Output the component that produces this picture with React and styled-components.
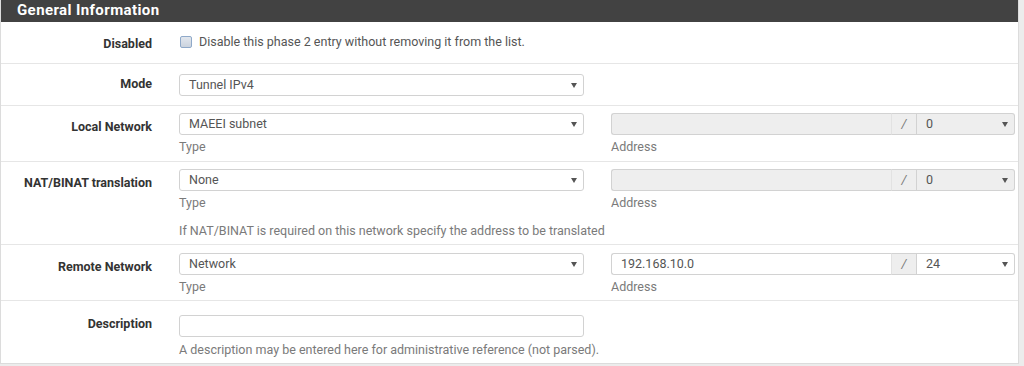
import React from 'react';
import styled, { createGlobalStyle } from 'styled-components';

const GlobalStyle = createGlobalStyle`
  body {
    margin: 0;
    background: #ececec;
    font-family: Roboto, "Liberation Sans", Arial, sans-serif;
    font-size: 12.5px;
    color: #333;
  }
`;

const Panel = styled.div`
  width: 1017px;
  background: #fff;
  border: 1px solid #dcdcdc;
  border-top: none;
`;

const PanelHeading = styled.div`
  height: 22px;
  background: #424242;
  color: #fff;
  font-size: 15px;
  font-weight: 700;
  line-height: 20px;
  padding-left: 16px;
  letter-spacing: 0.4px;
`;

const Row = styled.div`
  display: flex;
  align-items: flex-start;
  padding: ${(p) => p.$top}px 0 ${(p) => p.$bottom}px;
  border-bottom: ${(p) => (p.$last ? 'none' : '1px solid #e6e6e6')};
`;

const Label = styled.div`
  flex: 0 0 151px;
  text-align: right;
  font-weight: 700;
  line-height: 18px;
  color: #333;
  margin-top: ${(p) => p.$offset}px;
`;

const Field = styled.div`
  flex: 0 0 405px;
  min-width: 0;
  margin-left: 27px;
  display: flex;
  flex-direction: column;
`;

const SecondField = styled(Field)`
  flex: 0 0 404px;
`;

const Help = styled.div`
  color: #7a7a7a;
  line-height: 18px;
  white-space: nowrap;
  margin-top: ${(p) => p.$gap || 3}px;
`;

const CheckLine = styled.label`
  display: flex;
  align-items: center;
  gap: 7px;
  line-height: 18px;
  color: #555;
  white-space: nowrap;
  margin-left: 1px;
`;

const Check = styled.span`
  flex: none;
  width: 10px;
  height: 10px;
  border: 1px solid #8fa9c9;
  border-radius: 2px;
  background: linear-gradient(#e2e7ee, #cbd3de);
`;

const Box = styled.div`
  position: relative;
  height: 22px;
  box-sizing: border-box;
  border: 1px solid #d2d2d2;
  border-radius: 3px;
  background: ${(p) => (p.$disabled ? '#eeeeee' : '#fff')};
  color: #555;
  line-height: 20px;
  padding-left: 9px;
`;

const Arrow = styled.svg`
  position: absolute;
  right: 6px;
  top: 8px;
`;

const Group = styled.div`
  display: flex;
`;

const GroupInput = styled(Box)`
  flex: 1 1 auto;
  border-radius: 3px 0 0 3px;
  border-right: none;
`;

const Addon = styled.div`
  width: 26px;
  height: 22px;
  box-sizing: border-box;
  border: 1px solid #d2d2d2;
  border-left: 1px solid #e2e2e2;
  background: #eee;
  color: #777;
  line-height: 20px;
  text-align: center;
  font-style: italic;
`;

const GroupSelect = styled(Box)`
  width: 98px;
  border-left: none;
  border-radius: 0 3px 3px 0;
`;

const Caret = () => (
  <Arrow width="6" height="5" viewBox="0 0 6 5">
    <path d="M0 0 L6 0 L3 5 Z" fill="#555" />
  </Arrow>
);

const Select = ({ value }) => (
  <Box>
    {value}
    <Caret />
  </Box>
);

const Address = ({ value, mask, disabled }) => (
  <SecondField>
    <Group>
      <GroupInput $disabled={disabled}>{value}</GroupInput>
      <Addon>/</Addon>
      <GroupSelect $disabled={disabled}>
        {mask}
        <Caret />
      </GroupSelect>
    </Group>
    <Help>Address</Help>
  </SecondField>
);

const App = () => (
  <>
    <GlobalStyle />
    <Panel>
      <PanelHeading>General Information</PanelHeading>

      <Row $top={11} $bottom={10}>
        <Label $offset={2}>Disabled</Label>
        <Field>
          <CheckLine>
            <Check />
            Disable this phase 2 entry without removing it from the list.
          </CheckLine>
        </Field>
      </Row>

      <Row $top={10} $bottom={9}>
        <Label $offset={1}>Mode</Label>
        <Field>
          <Select value="Tunnel IPv4" />
        </Field>
      </Row>

      <Row $top={7} $bottom={5}>
        <Label $offset={5}>Local Network</Label>
        <Field>
          <Select value="MAEEI subnet" />
          <Help>Type</Help>
        </Field>
        <Address value="" mask="0" disabled />
      </Row>

      <Row $top={7} $bottom={4}>
        <Label $offset={5}>NAT/BINAT translation</Label>
        <Field>
          <Select value="None" />
          <Help>Type</Help>
          <Help $gap={10}>If NAT/BINAT is required on this network specify the address to be translated</Help>
        </Field>
        <Address value="" mask="0" disabled />
      </Row>

      <Row $top={8} $bottom={4}>
        <Label $offset={5}>Remote Network</Label>
        <Field>
          <Select value="Network" />
          <Help>Type</Help>
        </Field>
        <Address value="192.168.10.0" mask="24" />
      </Row>

      <Row $top={14} $bottom={4} $last>
        <Label $offset={0}>Description</Label>
        <Field>
          <Box />
          <Help $gap={4}>A description may be entered here for administrative reference (not parsed).</Help>
        </Field>
      </Row>
    </Panel>
  </>
);

export default App;
